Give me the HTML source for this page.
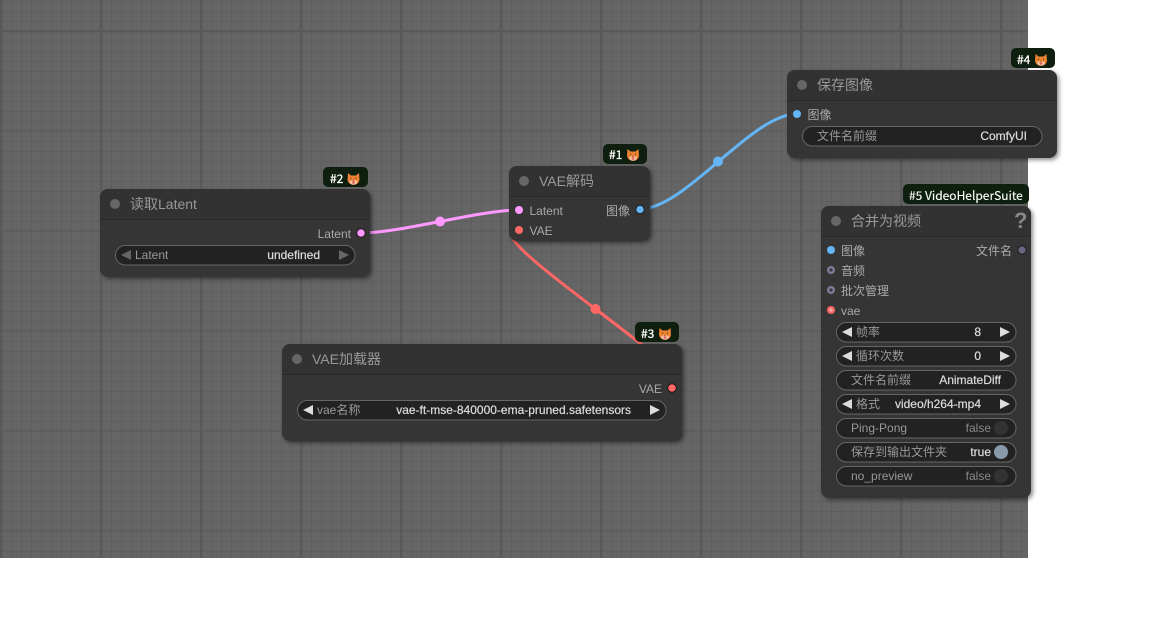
<!DOCTYPE html>
<html><head><meta charset="utf-8"><style>
html,body{margin:0;padding:0;background:#fff;width:1157px;height:628px;overflow:hidden}
#bg{position:absolute;left:0;top:0;width:1028px;height:558px;background-color:#656565;
background-image:
linear-gradient(180deg,transparent 30px,#5a5a5a 30px,#5a5a5a 32.5px,transparent 32.5px),
linear-gradient(90deg,#595959 0,#595959 2.5px,transparent 2.5px),
linear-gradient(180deg,#5e5e5e 0,#5e5e5e 2px,transparent 2px),
linear-gradient(90deg,#5e5e5e 0,#5e5e5e 1px,transparent 1px),
linear-gradient(180deg,#5e5e5e 0,#5e5e5e 1px,transparent 1px);
background-size:100% 100%,100px 100px,100px 100px,10px 10px,10px 10px;
background-repeat:no-repeat,repeat,repeat,repeat,repeat;
background-position:0 0,0 0,0 30px,1px 0,0 1px}
svg{position:absolute;left:0;top:0}
text{font-family:"Liberation Sans","Noto Sans CJK SC",sans-serif;font-size:12px;fill:#aaa}
.t{font-size:14px;fill:#999}
.v{fill:#ddd;text-anchor:end;stroke:#ddd;stroke-width:.2}
.l{fill:#999}
.r{text-anchor:end}
.b{font-size:12px;fill:#fff;stroke:#fff;stroke-width:.3;font-family:"Noto Sans CJK SC",sans-serif}
.n{fill:#353535;filter:url(#s)}
.h{fill:#323232}
.w{fill:#222;stroke:#666;stroke-width:1}
.a{fill:#ddd}
.bd{fill:#0f1f0f}
</style></head><body>
<div id="bg"></div>
<svg width="1157" height="628" viewBox="0 0 1157 628">
<defs>
<filter id="s" x="-10%" y="-10%" width="125%" height="125%"><feDropShadow dx="2" dy="2" stdDeviation="2" flood-color="#000" flood-opacity=".45"/></filter>
<g id="fox">
<path d="M-5.500-6 L-2.500-3.500 L2.500-3.500 L5.500-6 L6 1 Q5 5.800 0 5.800 Q-5 5.800-6 1Z" fill="#ec8434"/>
<path d="M-4 2.500 Q-3 5.800 0 5.800 Q3 5.800 4 2.500 Q2 .8 0 2 Q-2 .8-4 2.500Z" fill="#f6c4a6"/>
<ellipse cx="0" cy="3.500" rx="1.400" ry="1.200" fill="#d8605a"/>
<circle cx="-2.500" cy="-.8" r=".6" fill="#5a2a14"/><circle cx="2.500" cy="-.8" r=".6" fill="#5a2a14"/>
<circle cx="0" cy="1.300" r=".5" fill="#5a2a14"/>
</g>
</defs>
<g fill="none" stroke-width="3">
<path d="M361 233 C401 233 479 210 519 210" stroke="#f9f"/>
<path d="M640 209 C686 209 751 114 797 114" stroke="#64b5f6"/>
<path d="M672 388 C727 388 464 230 519 230" stroke="#f66"/>
</g>
<circle cx="440" cy="221.500" r="5" fill="#f9f"/>
<circle cx="718" cy="161.500" r="5" fill="#64b5f6"/>
<circle cx="595.500" cy="309" r="5" fill="#f66"/>

<!-- badges -->
<rect x="323" y="167" width="45" height="20" rx="5" class="bd"/>
<text x="330" y="183" class="b">#2</text><use href="#fox" x="353.500" y="179"/>
<rect x="603" y="144" width="44" height="20" rx="5" class="bd"/>
<text x="609" y="159" class="b">#1</text><use href="#fox" x="633" y="155"/>
<rect x="635" y="322" width="44" height="20" rx="5" class="bd"/>
<text x="641" y="338" class="b">#3</text><use href="#fox" x="665" y="334"/>
<rect x="1011" y="48" width="44" height="20" rx="5" class="bd"/>
<text x="1017" y="64" class="b">#4</text><use href="#fox" x="1041" y="60"/>
<rect x="903" y="184" width="126" height="20" rx="5" class="bd"/>
<text x="909" y="200" class="b" style="stroke-width:.12">#5 VideoHelperSuite</text>

<!-- Node 2 -->
<rect x="100" y="189" width="270" height="88" rx="8" class="n"/>
<path d="M100 219V197a8 8 0 0 1 8-8H362a8 8 0 0 1 8 8V219Z" class="h"/>
<rect x="100" y="219" width="270" height="1" fill="#292929"/>
<circle cx="115" cy="204" r="5" fill="#666"/>
<text x="130" y="209" class="t">读取Latent</text>
<text x="351" y="238" class="r">Latent</text>
<circle cx="361" cy="233" r="4.200" fill="#f9f" stroke="#111" stroke-width=".8"/>
<rect x="115.500" y="245.500" width="239.500" height="19.500" rx="9.750" class="w"/>
<path d="M131 250L121 255L131 260Z M339 250L349 255L339 260Z" fill="#666"/>
<text x="135" y="259" class="l">Latent</text>
<text x="320" y="259" class="v">undefined</text>

<!-- Node 1 -->
<rect x="509" y="166" width="141" height="75" rx="8" class="n"/>
<path d="M509 196V174a8 8 0 0 1 8-8H642a8 8 0 0 1 8 8V196Z" class="h"/>
<rect x="509" y="196" width="141" height="1" fill="#292929"/>
<circle cx="524" cy="181" r="5" fill="#666"/>
<text x="539" y="186" class="t">VAE解码</text>
<circle cx="519" cy="210" r="4" fill="#f9f"/>
<circle cx="519" cy="230" r="4" fill="#f66"/>
<text x="529.500" y="215">Latent</text>
<text x="529.500" y="235">VAE</text>
<text x="630" y="215" class="r">图像</text>
<circle cx="640" cy="209.500" r="4.200" fill="#64b5f6" stroke="#111" stroke-width=".8"/>

<!-- Node 3 -->
<rect x="282" y="344" width="400" height="97" rx="8" class="n"/>
<path d="M282 374V352a8 8 0 0 1 8-8H674a8 8 0 0 1 8 8V374Z" class="h"/>
<rect x="282" y="374" width="400" height="1" fill="#292929"/>
<circle cx="297" cy="359" r="5" fill="#666"/>
<text x="312" y="364" class="t">VAE加载器</text>
<text x="662" y="393" class="r">VAE</text>
<circle cx="672" cy="388" r="4.200" fill="#f66" stroke="#111" stroke-width=".8"/>
<rect x="297.500" y="400.500" width="368.500" height="19.500" rx="9.750" class="w"/>
<path d="M313 405L303 410L313 415Z M650 405L660 410L650 415Z" class="a"/>
<text x="317" y="414" class="l">vae名称</text>
<text x="631" y="414" class="v">vae-ft-mse-840000-ema-pruned.safetensors</text>

<!-- Node 4 -->
<rect x="787" y="70" width="270" height="88" rx="8" class="n"/>
<path d="M787 100V78a8 8 0 0 1 8-8H1049a8 8 0 0 1 8 8V100Z" class="h"/>
<rect x="787" y="100" width="270" height="1" fill="#292929"/>
<circle cx="802" cy="85" r="5" fill="#666"/>
<text x="817" y="90" class="t">保存图像</text>
<circle cx="797" cy="114" r="4" fill="#64b5f6"/>
<text x="807.500" y="119">图像</text>
<rect x="802.500" y="126.500" width="239.500" height="19.500" rx="9.750" class="w"/>
<text x="817" y="140" class="l">文件名前缀</text>
<text x="1027" y="140" class="v">ComfyUI</text>

<!-- Node 5 -->
<rect x="821" y="206" width="210" height="292" rx="8" class="n"/>
<path d="M821 236V214a8 8 0 0 1 8-8H1023a8 8 0 0 1 8 8V236Z" class="h"/>
<rect x="821" y="236" width="210" height="1" fill="#292929"/>
<circle cx="836" cy="221" r="5" fill="#666"/>
<text x="851" y="226" class="t">合并为视频</text>
<text x="1014" y="228" style="font-size:22px;font-weight:bold;fill:#888">?</text>
<circle cx="831" cy="250" r="4" fill="#64b5f6"/>
<circle cx="831" cy="270" r="4" fill="#7c7c96"/><circle cx="831" cy="270" r="1.600" fill="#3a3a44"/>
<circle cx="831" cy="290" r="4" fill="#7c7c96"/><circle cx="831" cy="290" r="1.600" fill="#3a3a44"/>
<circle cx="831" cy="310" r="4" fill="#f66"/><circle cx="831" cy="310" r="1.600" fill="#e8b0b0"/>
<text x="841" y="255">图像</text>
<text x="841" y="275">音频</text>
<text x="841" y="295">批次管理</text>
<text x="841" y="315">vae</text>
<text x="1012" y="255" class="r">文件名</text>
<circle cx="1022" cy="250" r="4.200" fill="#66667c" stroke="#111" stroke-width=".8"/>

<rect x="836.500" y="322.500" width="179.500" height="19.500" rx="9.750" class="w"/>
<path d="M852 327L842 332L852 337Z M1000 327L1010 332L1000 337Z" class="a"/>
<text x="856" y="336" class="l">帧率</text><text x="981" y="336" class="v">8</text>

<rect x="836.500" y="346.500" width="179.500" height="19.500" rx="9.750" class="w"/>
<path d="M852 351L842 356L852 361Z M1000 351L1010 356L1000 361Z" class="a"/>
<text x="856" y="360" class="l">循环次数</text><text x="981" y="360" class="v">0</text>

<rect x="836.500" y="370.500" width="179.500" height="19.500" rx="9.750" class="w"/>
<text x="851" y="384" class="l">文件名前缀</text><text x="1001" y="384" class="v">AnimateDiff</text>

<rect x="836.500" y="394.500" width="179.500" height="19.500" rx="9.750" class="w"/>
<path d="M852 399L842 404L852 409Z M1000 399L1010 404L1000 409Z" class="a"/>
<text x="856" y="408" class="l">格式</text><text x="981" y="408" class="v">video/h264-mp4</text>

<rect x="836.500" y="418.500" width="179.500" height="19.500" rx="9.750" class="w"/>
<text x="851" y="432" class="l">Ping-Pong</text><text x="991" y="432" class="r" style="fill:#888">false</text>
<circle cx="1001" cy="428" r="7" fill="#333"/>

<rect x="836.500" y="442.500" width="179.500" height="19.500" rx="9.750" class="w"/>
<text x="851" y="456" class="l">保存到输出文件夹</text><text x="991" y="456" class="v">true</text>
<circle cx="1001" cy="452" r="7" fill="#89a"/>

<rect x="836.500" y="466.500" width="179.500" height="19.500" rx="9.750" class="w"/>
<text x="851" y="480" class="l">no_preview</text><text x="991" y="480" class="r" style="fill:#888">false</text>
<circle cx="1001" cy="476" r="7" fill="#333"/>
</svg>
</body></html>
